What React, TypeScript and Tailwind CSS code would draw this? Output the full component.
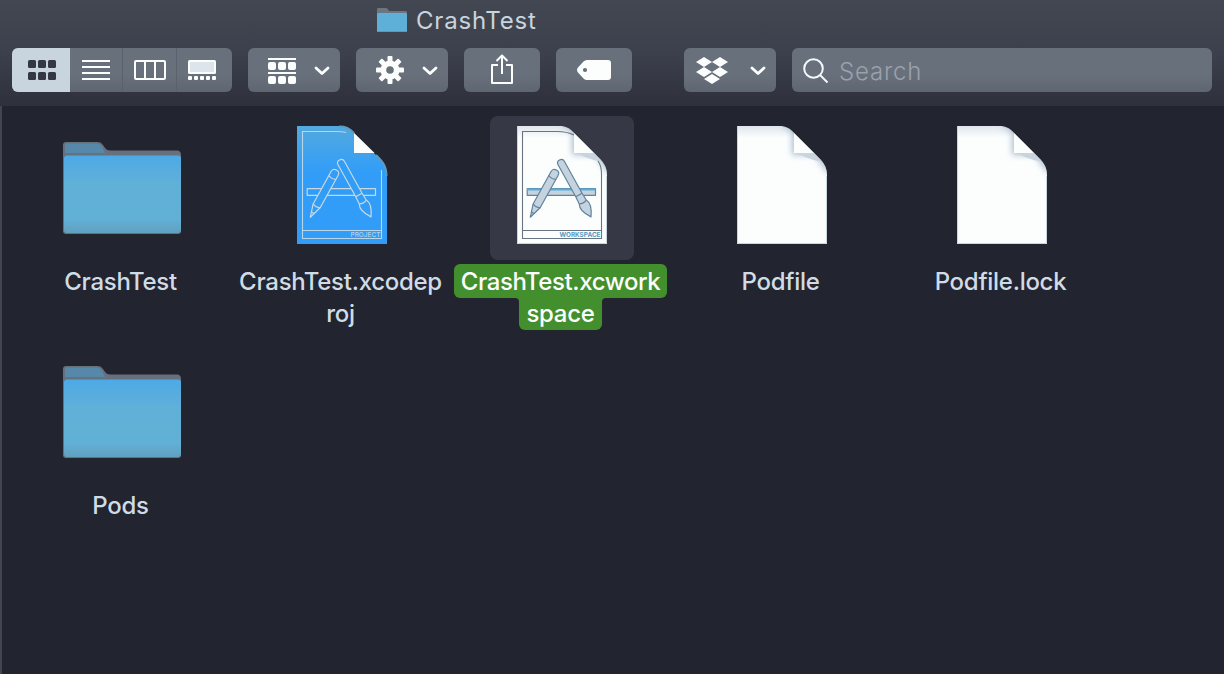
import React from "react";

const BTN = "flex h-11 items-center rounded-md bg-gradient-to-b from-[#68707b] from-60% to-[#5f6671]";

function Chevron() {
  return (
    <svg className="mt-px" width="16" height="10" viewBox="0 0 16 10" fill="none" stroke="#fcfefe" strokeWidth="2.800" strokeLinecap="round" strokeLinejoin="round">
      <path d="M2 2 L8 7.6 L14 2" />
    </svg>
  );
}

function ViewGrid() {
  return (
    <svg width="28" height="20" viewBox="0 0 28 20" fill="#343744">
      {[0, 10, 20].map((x) => [0, 12].map((y) => <rect key={`${x}-${y}`} x={x} y={y} width="8" height="8" rx="1.5" />))}
    </svg>
  );
}

function ViewList() {
  return (
    <svg width="28" height="20" viewBox="0 0 28 20" fill="#fcfefe">
      {[0, 6, 12, 18].map((y) => <rect key={y} y={y} width="28" height="2" />)}
    </svg>
  );
}

function ViewColumns() {
  return (
    <svg width="32" height="20" viewBox="0 0 32 20" fill="none" stroke="#fcfefe" strokeWidth="2">
      <rect x="1" y="1" width="30" height="18" rx="1" />
      <path d="M11 1V19M21 1V19" />
    </svg>
  );
}

function ViewGallery() {
  return (
    <svg width="28" height="20" viewBox="0 0 28 20" fill="#fcfefe">
      <rect width="28" height="14" rx="1.5" />
      <rect x="2" y="2" width="24" height="10" fill="#dde5ec" />
      {[0, 6, 12, 18, 24].map((x) => <rect key={x} x={x} y="16" width="4" height="4" rx="1" />)}
    </svg>
  );
}

function GroupIcon() {
  return (
    <svg className="mt-0.5" width="28" height="26" viewBox="0 0 28 26" fill="#fcfefe">
      <rect width="28" height="2" />
      <rect y="14" width="28" height="2" />
      {[0, 10, 20].map((x) => [4, 18].map((y) => <rect key={`${x}-${y}`} x={x} y={y} width="8" height="8" rx="2" />))}
    </svg>
  );
}

function Gear() {
  return (
    <svg width="28" height="28" viewBox="0 0 28 28">
      <g fill="#fcfefe">
        {[0, 45, 90, 135].map((a) => <rect key={a} x="11.5" y="0" width="5" height="28" rx="1" transform={`rotate(${a} 14 14)`} />)}
        <circle cx="14" cy="14" r="9.5" />
      </g>
      <circle cx="14" cy="14" r="3.8" fill="#68707b" />
    </svg>
  );
}

function Share() {
  return (
    <svg width="22" height="30" viewBox="0 0 22 30" fill="none" stroke="#fcfefe" strokeWidth="2" strokeLinejoin="round">
      <path d="M7 11H1V29H21V11H15" />
      <path d="M11 20V1.5M5.5 7L11 1.5L16.5 7" />
    </svg>
  );
}

function Tag() {
  return (
    <svg width="34" height="20" viewBox="0 0 34 20">
      <path d="M10 0H31Q34 0 34 3V17Q34 20 31 20H10Q8 20 6.500 18.500L1 12.500Q-1 10 1 7.500L6.500 1.500Q8 0 10 0Z" fill="#fcfefe" />
      <circle cx="8" cy="10" r="2.100" fill="#68707b" />
    </svg>
  );
}

function Dropbox() {
  return (
    <svg className="mt-px" width="32" height="27" viewBox="0 0 32 27" fill="#fcfefe">
      <path d="M8 0L16 5L8 10L0 5ZM24 0L32 5L24 10L16 5ZM8 10L16 15L8 20L0 15ZM24 10L32 15L24 20L16 15ZM16 17L24 22L16 27L8 22Z" />
    </svg>
  );
}

function Magnifier() {
  return (
    <svg className="mt-0.5" width="26" height="26" viewBox="0 0 26 26" fill="none" stroke="#f4f8fa" strokeWidth="2">
      <circle cx="10.500" cy="10.500" r="9.300" />
      <path d="M17 17L24.500 24.500" />
    </svg>
  );
}

function FolderIcon() {
  return (
    <svg width="144" height="144" viewBox="0 0 144 144">
      <defs>
        <linearGradient id="folder" x1="0" y1="0" x2="0" y2="1">
          <stop offset="0" stopColor="#4da9e6" />
          <stop offset="0.35" stopColor="#60b0d8" />
          <stop offset="0.82" stopColor="#62b0d6" />
          <stop offset="1" stopColor="#61a0bf" />
        </linearGradient>
      </defs>
      <path d="M13 114V29Q13 26 16 26H48Q51 26 53 29L55 32Q57 34.500 60 34.500H127Q131 34.500 131 39V114Z" fill="#67717d" />
      <path d="M15 37V28.500Q15 27.500 17 27.500H47Q50 27.500 51.500 30L55 37Z" fill="#5688aa" />
      <rect x="13" y="39" width="118" height="79" rx="3" fill="#66717c" />
      <rect x="14" y="39.500" width="117" height="77.500" rx="3" fill="url(#folder)" />
    </svg>
  );
}

const PAGE = "M27 10H69C76 10 79 12 84 17L106 39C113 46 117 50 117 60V128H27Z";

function PlainDocument() {
  return (
    <svg width="144" height="144" viewBox="0 0 144 144">
      <PageShade />
    </svg>
  );
}

function PageShade() {
  return (
    <>
      <defs>
        <clipPath id="page"><path d={PAGE} /></clipPath>
        <filter id="soft" x="-30%" y="-30%" width="160%" height="160%"><feGaussianBlur stdDeviation="3" /></filter>
        <linearGradient id="pageTop" x1="0" y1="0" x2="0" y2="1">
          <stop offset="0" stopColor="#dfe6ed" />
          <stop offset="0.1" stopColor="#fcfefe" />
        </linearGradient>
      </defs>
      <path d={PAGE} fill="url(#pageTop)" />
      <g clipPath="url(#page)">
        <path d="M70 8L82 16V39H105L119 60V46L86 6Z" fill="#aebfcf" filter="url(#soft)" />
        <path d="M84 17V37H104Z" fill="#fcfefe" />
        <path d="M87 37H104L112 46Q97 43 87 37Z" fill="#c8d4de" />
      </g>
      <path d="M27.500 10V127.500H116.500V60" fill="none" stroke="#c8d4de" />
    </>
  );
}

function XcodeDocument({ kind }: { kind: "PROJECT" | "WORKSPACE" }) {
  const project = kind === "PROJECT";
  const line = project ? "#b9d5e8" : "#687481";
  const tool = project ? "#319df6" : "#c5d3df";
  const edge = project ? "#c8d8e3" : "#60849e";
  return (
    <svg width="144" height="144" viewBox="0 0 144 144">
      {project ? (
        <>
          <defs>
            <linearGradient id="blue" x1="0" y1="0" x2="0" y2="1">
              <stop offset="0" stopColor="#54a9df" />
              <stop offset="0.4" stopColor="#319df8" />
            </linearGradient>
          </defs>
          <path d={PAGE} fill="url(#blue)" />
          <path d="M69 10.500C76 10.500 79 12 84 17M106 39C113 46 116.500 50 116.500 60" fill="none" stroke="#5d9cbe" strokeWidth="2" />
          <path d="M84 17V37H104.500Z" fill="#fcfefe" />
        </>
      ) : <PageShade />}
      <g fill="none" stroke={line} strokeWidth="1.100">
        <path d={project ? "M76 16.500Q72 15.500 67 15.500H32.500V122.500H111.500V54" : "M84 19Q77 15.500 67 15.500H32.500V122.500H111.500V58Q111.500 50 108 45"} />
        <path d="M32 114.500H111" />
      </g>
      <g fill={tool} stroke={edge} strokeWidth="1.200" strokeLinejoin="round">
        <rect x="37.200" y="72.700" width="68.300" height="6.600" />
        {!project && <path d="M37 73.500H105.500" stroke="#5aacd8" strokeWidth="2" />}
        <g transform="translate(66.500 54) rotate(29)">
          <path d="M-4 4Q-4 0 0 0Q4 0 4 4V41L0 54L-4 41Z" />
          <path d="M-4 8.500Q0 10.500 4 8.500M-4 41Q0 43 4 41M-1.500 49L1.500 49" fill="none" />
        </g>
        <g transform="translate(69.500 44) rotate(-29)">
          <path d="M-3.600 3.500Q-3.600 0 0 0Q3.600 0 3.600 3.500V40L4 48Q7.500 54 0 65Q-7.500 54 -4 48L-3.600 40Z" />
          <path d="M-3.600 40H3.600M-4 48Q0 50 4 48" fill="none" />
        </g>
      </g>
      <text x="110.500" y="121" textAnchor="end" textLength={project ? 30 : 41} lengthAdjust="spacingAndGlyphs" fontSize="6.500" fontWeight={project ? 500 : 700} fill={project ? "#b5d3e8" : "#5297bd"} className="font-['Inter',sans-serif]">{kind}</text>
    </svg>
  );
}

function Label({ lines }: { lines: string[] }) {
  return (
    <>
      <span className="h-[34px] px-2 pt-0.5">{lines[0]}</span>
      {lines.slice(1).map((text) => <span key={text} className="h-8 px-[7px]">{text}</span>)}
    </>
  );
}

function SelectedLabel({ lines }: { lines: string[] }) {
  return (
    <>
      <span className="h-[34px] rounded-md bg-[#438f2e] px-[7px] pt-0.5 tracking-[-0.38px] text-[#fcfefe]">{lines[0]}</span>
      <div className="flex">
        <svg width="4" height="4" viewBox="0 0 4 4" fill="#438f2e"><path d="M0 0H4V4Q4 0 0 0Z" /></svg>
        <span className="h-8 rounded-b-md bg-[#438f2e] px-[7px] text-[#fcfefe]">{lines[1]}</span>
        <svg width="4" height="4" viewBox="0 0 4 4" fill="#438f2e"><path d="M4 0H0V4Q0 0 4 0Z" /></svg>
      </div>
    </>
  );
}

function Item({ icon, lines, selected = false }: { icon: React.ReactNode; lines: string[]; selected?: boolean }) {
  return (
    <div className="flex h-56 flex-col items-center">
      <div className={selected ? "size-36 rounded-lg bg-[#363945]" : "size-36"}>{icon}</div>
      <div className="mt-1 mr-[3px] flex flex-col items-center text-2xl leading-8 font-[450] tracking-[-0.28px] text-[#d0dce5]">
        {selected ? <SelectedLabel lines={lines} /> : <Label lines={lines} />}
      </div>
    </div>
  );
}

export default function App() {
  return (
    <div className="flex h-[674px] w-[1224px] flex-col overflow-hidden bg-[#22242f] font-['Inter','Liberation_Sans',sans-serif]">
      <header className="h-[106px] bg-gradient-to-b from-[#434752] via-[#3c404c] via-50% to-[#2e313c]">
        <div className="flex h-12 items-start pt-1 pl-[377px]">
          <svg className="mt-1" width="30" height="24" viewBox="0 0 30 24">
            <path d="M0 1Q0 0 1 0H9Q11 0 12 3H29Q30 3 30 5V23H0Z" fill="#6a7682" />
            <rect y="5" width="30" height="19" rx="1" fill="#5fb0d9" />
            <path d="M1 23.500H29" stroke="#6d94aa" />
          </svg>
          <h1 className="mt-px ml-[9px] text-2xl leading-8 font-normal tracking-[0.8px] text-[#c8d4de]">CrashTest</h1>
        </div>
        <div className="flex px-3">
          <div className="flex h-11 w-[220px] overflow-hidden rounded-md bg-gradient-to-b from-[#68707b] from-60% to-[#5f6671]">
            <div className="flex w-[58px] items-center justify-center bg-[#c8d4de] pl-0.5"><ViewGrid /></div>
            <div className="flex w-[53px] items-center justify-center border-r border-[#5b626e]"><ViewList /></div>
            <div className="flex w-[54px] items-center justify-center border-r border-[#5b626e]"><ViewColumns /></div>
            <div className="flex flex-1 items-center pl-[11px]"><ViewGallery /></div>
          </div>
          <div className={`${BTN} ml-4 w-[92px] justify-between pr-2.5 pl-5`}><GroupIcon /><Chevron /></div>
          <div className={`${BTN} ml-4 w-[92px] justify-between pr-2.5 pl-5`}><Gear /><Chevron /></div>
          <div className={`${BTN} ml-4 w-[76px] justify-center pb-0.5`}><Share /></div>
          <div className={`${BTN} ml-4 w-[76px] justify-center`}><Tag /></div>
          <div className={`${BTN} ml-[52px] w-[92px] justify-between pr-2.5 pl-3`}><Dropbox /><Chevron /></div>
          <div className={`${BTN} ml-4 flex-1 pl-[11px]`}>
            <Magnifier />
            <span className="mt-[3px] ml-2.5 text-2xl font-light tracking-[0.8px] text-[#98a2ad]">Search</span>
          </div>
        </div>
      </header>
      <main className="grid flex-1 grid-cols-[repeat(5,220px)] content-start border-l-2 border-[#414551] pt-2.5 pl-2.5">
        <Item icon={<FolderIcon />} lines={["CrashTest"]} />
        <Item icon={<XcodeDocument kind="PROJECT" />} lines={["CrashTest.xcodep", "roj"]} />
        <Item icon={<XcodeDocument kind="WORKSPACE" />} lines={["CrashTest.xcwork", "space"]} selected />
        <Item icon={<PlainDocument />} lines={["Podfile"]} />
        <Item icon={<PlainDocument />} lines={["Podfile.lock"]} />
        <Item icon={<FolderIcon />} lines={["Pods"]} />
      </main>
    </div>
  );
}
